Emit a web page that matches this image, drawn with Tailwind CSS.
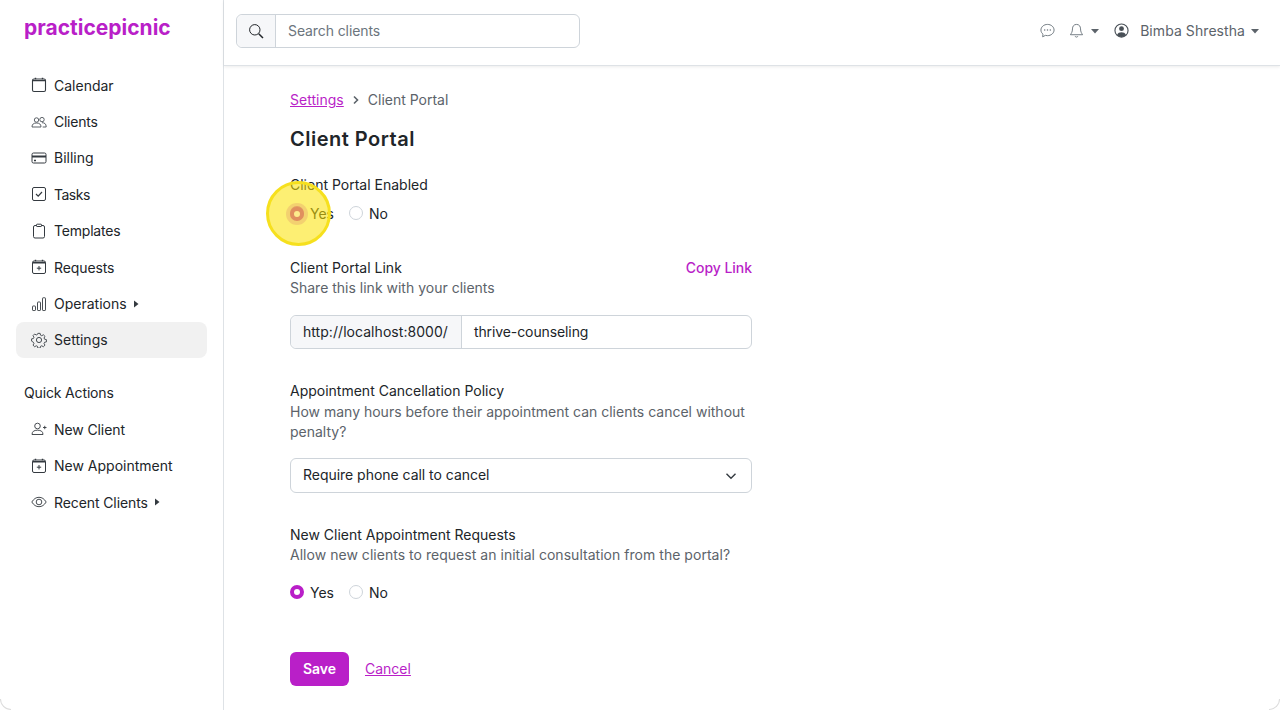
<!DOCTYPE html>
<html><head><meta charset="utf-8">
<script src="https://cdn.jsdelivr.net/npm/@tailwindcss/browser@4"></script>
<title>Client Portal</title></head>
<body class="bg-white font-['Inter',sans-serif] text-[14px] text-[#212529]">
<div class="relative flex h-[710px] w-[1280px] overflow-hidden">
<aside class="flex h-full w-[224px] shrink-0 flex-col border-r border-[#dee2e6] px-4">
  <div class="ml-2 mt-[14px] h-[28px] text-[21px] font-bold leading-[28px] text-[#b91fc8]">practicepicnic</div>
  <nav class="mt-[25px] flex w-[191px] flex-col">
    <a class="flex h-[36.4px] items-center gap-[7px] rounded-lg px-[15px]"><svg class="h-4 w-4 shrink-0" viewBox="0 0 16 16" fill="none" stroke="#343a40" stroke-width="1.1"><rect x="1.5" y="2" width="13" height="12.5" rx="1.5"/><path d="M1.5 3.6h13M4.5 .8v1.4M11.5 .8v1.4" stroke-width="1.4"/></svg><span>Calendar</span></a>
    <a class="flex h-[36.4px] items-center gap-[7px] rounded-lg px-[15px]"><svg class="h-4 w-4 shrink-0" viewBox="0 0 16 16" fill="none" stroke="#495057" stroke-width=".9"><circle cx="5.5" cy="6" r="2.2"/><circle cx="11" cy="5.6" r="2.2"/><path d="M1 13c0-3 1.800-4 4.500-4s4.500 1 4.500 4zM11 8.700c2.500 0 4.200 1 4.200 4.300h-3.500"/></svg><span class="tracking-[-0.25px]">Clients</span></a>
    <a class="flex h-[36.4px] items-center gap-[7px] rounded-lg px-[15px]"><svg class="h-4 w-4 shrink-0" viewBox="0 0 16 16" fill="none" stroke="#343a40" stroke-width="1"><rect x="1" y="3" width="14" height="10" rx="1.5"/><path d="M1 6.500h14" stroke-width="2"/><path d="M3 10.500h2" stroke-width="1.500"/></svg><span>Billing</span></a>
    <a class="flex h-[36.4px] items-center gap-[7px] rounded-lg px-[15px]"><svg class="h-4 w-4 shrink-0" viewBox="0 0 16 16" fill="none" stroke="#343a40" stroke-width="1"><rect x="1.500" y="1.500" width="13" height="13" rx="1.500"/><path d="M5 8l2.200 2.200L11 6" stroke-width="1.200"/></svg><span class="tracking-[-0.5px]">Tasks</span></a>
    <a class="flex h-[36.4px] items-center gap-[7px] rounded-lg px-[15px]"><svg class="h-4 w-4 shrink-0" viewBox="0 0 16 16" fill="none" stroke="#343a40" stroke-width="1"><path d="M5 2.500H4A1.500 1.500 0 0 0 2.500 4v9.500A1.500 1.500 0 0 0 4 15h8a1.500 1.500 0 0 0 1.500-1.500V4A1.500 1.500 0 0 0 12 2.500h-1"/><rect x="5.500" y="1.200" width="5" height="2.300" rx=".6"/></svg><span class="tracking-[-0.2px]">Templates</span></a>
    <a class="flex h-[36.4px] items-center gap-[7px] rounded-lg px-[15px]"><svg class="h-4 w-4 shrink-0" viewBox="0 0 16 16" fill="none" stroke="#343a40" stroke-width="1"><rect x="1.500" y="2" width="13" height="12.500" rx="1.500"/><path d="M1.500 3.800h13M4.500 .8v1.400M11.500 .8v1.400" stroke-width="1.400"/><path d="M8 7v4.400M5.800 9.200h4.400"/></svg><span class="tracking-[-0.1px]">Requests</span></a>
    <a class="flex h-[36.4px] items-center gap-[7px] rounded-lg px-[15px]"><svg class="h-4 w-4 shrink-0" viewBox="0 0 16 16" fill="none" stroke="#343a40" stroke-width=".9"><rect x="1.500" y="10" width="3" height="4.500" rx=".6"/><rect x="6.500" y="6" width="3" height="8.500" rx=".6"/><rect x="11.500" y="1.800" width="3" height="12.700" rx=".6"/></svg><span>Operations</span><svg class="-ml-[2px] h-2 w-2" viewBox="0 0 8 8" fill="#343a40"><path d="M2 .5L6.500 4 2 7.500z"/></svg></a>
    <a class="flex h-[36.4px] items-center gap-[7px] rounded-lg bg-[#f1f1f1] px-[15px]"><svg class="h-4 w-4 shrink-0" viewBox="0 0 16 16" fill="none" stroke="#343a40" stroke-width=".9"><circle cx="8" cy="8" r="2.600"/><path d="M6.800 1h2.400l.4 1.900 1.300.6 1.700-1 1.700 1.700-1 1.700.6 1.300 1.900.4v2.400l-1.900.4-.6 1.300 1 1.700-1.700 1.700-1.700-1-1.300.6-.4 1.900H6.800l-.4-1.900-1.300-.6-1.700 1-1.700-1.700 1-1.700-.6-1.300L.2 9.200V6.800l1.900-.4.6-1.300-1-1.700 1.700-1.700 1.700 1 1.300-.6z" transform="translate(.4 .4) scale(.95)"/></svg><span>Settings</span></a>
  </nav>
  <div class="ml-2 mt-[24px] h-[21px] leading-[21px] tracking-[-0.15px]">Quick Actions</div>
  <nav class="mt-[8px] flex w-[191px] flex-col">
    <a class="flex h-[36.4px] items-center gap-[7px] rounded-lg px-[15px]"><svg class="h-4 w-4 shrink-0" viewBox="0 0 16 16" fill="none" stroke="#343a40" stroke-width=".9"><circle cx="6.500" cy="5" r="2.800"/><path d="M1 13.500c0-3 2-4.300 5.500-4.300s5.500 1.300 5.500 4.300zM12 6.500h3.500M13.750 4.800v3.400"/></svg><span class="tracking-[-0.1px]">New Client</span></a>
    <a class="flex h-[36.4px] items-center gap-[7px] rounded-lg px-[15px]"><svg class="h-4 w-4 shrink-0" viewBox="0 0 16 16" fill="none" stroke="#343a40" stroke-width="1"><rect x="1.500" y="2" width="13" height="12.500" rx="1.500"/><path d="M1.500 3.800h13M4.500 .8v1.400M11.500 .8v1.400" stroke-width="1.400"/><path d="M8 7v4.400M5.800 9.200h4.400"/></svg><span>New Appointment</span></a>
    <a class="flex h-[36.4px] items-center gap-[7px] rounded-lg px-[15px]"><svg class="h-4 w-4 shrink-0" viewBox="0 0 16 16" fill="none" stroke="#343a40" stroke-width=".9"><path d="M.8 8c2-3.200 4.300-4.700 7.200-4.700S13.200 4.800 15.200 8c-2 3.200-4.300 4.700-7.200 4.700S2.800 11.200.8 8z"/><circle cx="8" cy="8" r="2.800"/></svg><span class="tracking-[-0.1px]">Recent Clients</span><svg class="-ml-[2px] h-2 w-2" viewBox="0 0 8 8" fill="#343a40"><path d="M2 .5L6.500 4 2 7.500z"/></svg></a>
  </nav>
</aside>
<div class="flex min-w-0 flex-1 flex-col">
  <header class="flex h-[66px] shrink-0 items-center justify-between border-b border-[#dee2e6] pb-[4px] pl-3 pr-[21px] shadow-[0_1px_3px_rgba(0,0,0,0.08)]">
    <div class="flex h-[34px] w-[344px] rounded-md border border-[#ced4da]">
      <div class="flex w-[39px] items-center justify-center rounded-l-md border-r border-[#ced4da] bg-[#f6f7f9]"><svg class="h-4 w-4" viewBox="0 0 16 16" fill="none" stroke="#212529"><circle cx="6.800" cy="6.800" r="5.200"/><path d="M10.700 10.700L15 15" stroke-width="1.500"/></svg></div>
      <div class="flex flex-1 items-center pl-3 tracking-[-0.1px] text-[#6c757d]">Search clients</div>
    </div>
    <div class="flex items-center text-[#5c636a]">
      <svg class="h-[15px] w-[15px]" viewBox="0 0 16 16" fill="none" stroke="#6c757d"><path d="M8 1.500c3.900 0 7 2.700 7 6s-3.100 6-7 6c-.8 0-1.500-.1-2.200-.3L2.800 14.700l.4-2.800C1.800 10.800 1 9.300 1 7.500c0-3.300 3.100-6 7-6z"/><circle cx="5" cy="7.500" r=".8" fill="#6c757d" stroke="none"/><circle cx="8" cy="7.500" r=".8" fill="#6c757d" stroke="none"/><circle cx="11" cy="7.500" r=".8" fill="#6c757d" stroke="none"/></svg>
      <svg class="ml-[14px] h-[15px] w-[15px]" viewBox="0 0 16 16" fill="none" stroke="#6c757d"><path d="M8 1.500c-2.800 0-4.300 2-4.300 4.800 0 3.200-1.400 5-2.200 6.200h13c-.8-1.200-2.200-3-2.200-6.200 0-2.800-1.500-4.800-4.300-4.800zM6.500 14a1.600 1.600 0 0 0 3 0"/></svg>
      <svg class="ml-[7px] h-2 w-2" viewBox="0 0 8 8" fill="#5c636a"><path d="M0 2h8L4 6.500z"/></svg>
      <svg class="ml-[15px] h-[15px] w-[15px]" viewBox="0 0 16 16"><circle cx="8" cy="8" r="7" fill="none" stroke="#495057" stroke-width="1.200"/><circle cx="8" cy="6" r="2.600" fill="#495057"/><path d="M3.200 12.700C4 10.500 6 9.800 8 9.800s4 .7 4.800 2.900A7 7 0 0 1 8 15a7 7 0 0 1-4.800-2.300z" fill="#495057"/></svg>
      <span class="ml-[11px] tracking-[0.07px]">Bimba Shrestha</span>
      <svg class="ml-[6px] h-2 w-2" viewBox="0 0 8 8" fill="#5c636a"><path d="M0 2h8L4 6.500z"/></svg>
    </div>
  </header>
  <main class="w-[528px] pl-[66px]">
    <div class="mt-[23px] flex h-[21px] items-center leading-[21px] text-[#5c636a]"><a class="tracking-[0.02px] text-[#b91fc8] underline">Settings</a><svg class="mx-[7px] h-[10px] w-[10px]" viewBox="0 0 10 10" fill="none" stroke="#5c636a" stroke-width="1.600"><path d="M3 1.500L6.500 5 3 8.500"/></svg><span>Client Portal</span></div>
    <h1 class="mt-[14px] h-[30px] text-[20px] font-semibold leading-[30px] tracking-[0.5px]">Client Portal</h1>
    <div class="mt-[20px] h-[21px] leading-[21px]">Client Portal Enabled</div>
    <div class="mt-[8px] flex h-[20px] items-center">
      <span class="h-[14px] w-[14px] rounded-full border-[4px] border-[#b91fc8] bg-white"></span><span class="ml-[6px] w-[24px]">Yes</span>
      <span class="ml-[15px] h-[14px] w-[14px] rounded-full border border-[#ced4da] bg-white"></span><span class="ml-[6px]">No</span>
    </div>
    <div class="mt-[34px] flex h-[21px] justify-between leading-[21px]"><span>Client Portal Link</span><a class="tracking-[-0.05px] font-medium text-[#b91fc8]">Copy Link</a></div>
    <div class="h-[20px] leading-[20px] text-[#5c636a]">Share this link with your clients</div>
    <div class="mt-[17px] flex h-[34px] rounded-md border border-[#ced4da]">
      <div class="flex items-center rounded-l-md border-r border-[#ced4da] bg-[#f6f7f9] pb-[1px] pl-3 pr-[13px] tracking-[0.05px]">http://localhost:8000/</div>
      <div class="flex flex-1 items-center pb-[1px] pl-3 tracking-[-0.1px]">thrive-counseling</div>
    </div>
    <div class="mt-[31px] h-[21px] leading-[21px]">Appointment Cancellation Policy</div>
    <div class="mt-[1px] leading-[20px] text-[#5c636a]">How many hours before their appointment can clients cancel without penalty?</div>
    <div class="mt-[16px] flex h-[35px] items-center justify-between rounded-md border border-[#ced4da] pl-3 pr-[14px]"><span class="mb-[2px] tracking-[-0.03px]">Require phone call to cancel</span><svg class="h-3 w-3" viewBox="0 0 12 12" fill="none" stroke="#343a40" stroke-width="1.400"><path d="M1.500 3.800L6 8.300l4.500-4.500"/></svg></div>
    <div class="mt-[31px] h-[21px] leading-[21px]">New Client Appointment Requests</div>
    <div class="h-[20px] leading-[20px] tracking-[0.03px] text-[#5c636a]">Allow new clients to request an initial consultation from the portal?</div>
    <div class="mt-[17px] flex h-[20px] items-center">
      <span class="h-[14px] w-[14px] rounded-full border-[4px] border-[#b91fc8] bg-white"></span><span class="ml-[6px] w-[24px]">Yes</span>
      <span class="ml-[15px] h-[14px] w-[14px] rounded-full border border-[#ced4da] bg-white"></span><span class="ml-[6px]">No</span>
    </div>
    <div class="mt-[50px] flex items-center gap-4">
      <button class="h-[34px] w-[59px] rounded-md bg-[#b91fc8] pb-[1px] font-semibold text-white">Save</button>
      <a class="mb-[2px] text-[#b91fc8] underline">Cancel</a>
    </div>
  </main>
</div>
<div class="absolute left-[266px] top-[181px] h-[65px] w-[65px] rounded-full border-[3px] border-[#f6e01e] bg-[#fbe100]/55"></div>
<div class="absolute left-[286px] top-[203px] h-[22px] w-[22px] rounded-full bg-[#eab36e]/50"></div>
<div class="absolute left-[290px] top-[207px] h-[14px] w-[14px] rounded-full border-[4px] border-[#e08f5e] bg-[#fdec8c]"></div>
<div class="absolute bottom-0 left-0 h-[11px] w-[11px] rounded-bl-[11px] border-b border-l border-[#dcdcdc]"></div>
<div class="absolute bottom-0 right-0 h-[11px] w-[11px] rounded-br-[11px] border-b border-r border-[#dcdcdc]"></div>
</div>
</body></html>
